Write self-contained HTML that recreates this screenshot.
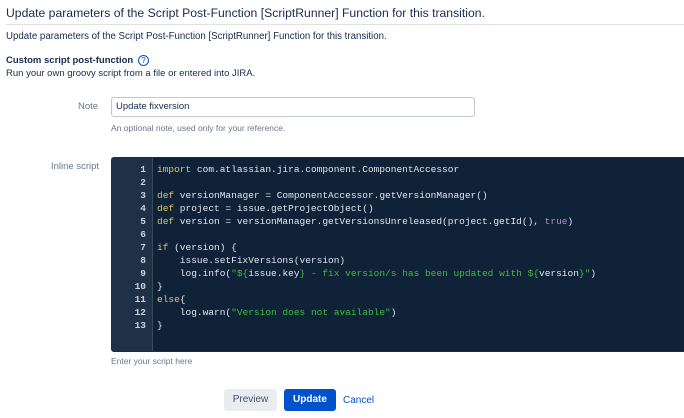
<!DOCTYPE html>
<html><head><style>
body{margin:0;width:684px;height:418px;background:#fff;font-family:"Liberation Sans",sans-serif;color:#172b4d;position:relative;overflow:hidden}
.a{position:absolute;white-space:nowrap}
h1{position:absolute;left:6px;top:6px;margin:0;font-size:12.2px;font-weight:normal;color:#172b4d;white-space:nowrap}
.hr{position:absolute;left:6px;right:0;top:24px;border-top:1px solid #dfe1e6}
.code{position:absolute;left:111px;top:157px;width:580px;height:193px;background:#0f2238;border:1px solid #2a2a2a;border-radius:3px;overflow:hidden}
.gut{position:absolute;left:0;top:0;width:40px;height:100%;background:#1e3147;border-right:1px solid #3a4b60}
.ln{position:absolute;right:6px;top:5px;text-align:right;font:bold 9.5px/13px "Liberation Mono",monospace;color:#c9d1dc}
.src{position:absolute;left:45px;top:5px;font:9.5px/13px "Liberation Mono",monospace;color:#dfe6ee;white-space:pre}
.k{color:#d9c66a}.s{color:#3cbc3c}.t{color:#b18bd6}
</style></head><body>
<h1>Update parameters of the Script Post-Function [ScriptRunner] Function for this transition.</h1>
<div class="hr"></div>
<div class="a" style="left:6px;top:31px;font-size:9.7px">Update parameters of the Script Post-Function [ScriptRunner] Function for this transition.</div>
<div class="a" style="left:6px;top:55px;font-size:9.5px;font-weight:bold">Custom script post-function</div>
<div class="a" style="left:138px;top:55px;width:9px;height:9px;border:1px solid #0052cc;border-radius:50%;font-size:8px;line-height:9px;text-align:center;color:#0052cc">?</div>
<div class="a" style="left:6px;top:68px;font-size:9.5px">Run your own groovy script from a file or entered into JIRA.</div>
<div class="a" style="left:78px;top:101px;font-size:9.5px;color:#6b778c">Note</div>
<div class="a" style="left:111px;top:97px;border:1px solid #c1c7d0;border-radius:3px;font-size:9.5px;line-height:18px;padding-left:4px;box-sizing:border-box;width:364px;height:20px">Update fixversion</div>
<div class="a" style="left:111px;top:123px;font-size:8.5px;color:#6b778c">An optional note, used only for your reference.</div>
<div class="a" style="left:51px;top:161px;font-size:9.5px;color:#6b778c">Inline script</div>
<div class="code"><div class="gut"><div class="ln">1<br>2<br>3<br>4<br>5<br>6<br>7<br>8<br>9<br>10<br>11<br>12<br>13</div></div>
<div class="src"><span class="k">import</span> com.atlassian.jira.component.ComponentAccessor

<span class="k">def</span> versionManager = ComponentAccessor.getVersionManager()
<span class="k">def</span> project = issue.getProjectObject()
<span class="k">def</span> version = versionManager.getVersionsUnreleased(project.getId(), <span class="t">true</span>)

<span class="k">if</span> (version) {
    issue.setFixVersions(version)
    log.info(<span class="s">"${</span>issue.key<span class="s">} - fix version/s has been updated with ${</span>version<span class="s">}"</span>)
}
<span class="k">else</span>{
    log.warn(<span class="s">"Version does not available"</span>)
}</div></div>
<div class="a" style="left:111px;top:356px;font-size:8.5px;color:#6b778c">Enter your script here</div>
<div class="a" style="left:224px;top:389px;width:53px;height:22px;background:#ebecf0;border-radius:3px;font-size:10px;line-height:22px;text-align:center;color:#42526e">Preview</div>
<div class="a" style="left:284px;top:389px;width:52px;height:22px;background:#0052cc;border-radius:3px;font-size:10px;font-weight:bold;line-height:22px;text-align:center;color:#fff">Update</div>
<div class="a" style="left:343px;top:395px;font-size:10px;color:#0052cc">Cancel</div>
</body></html>
